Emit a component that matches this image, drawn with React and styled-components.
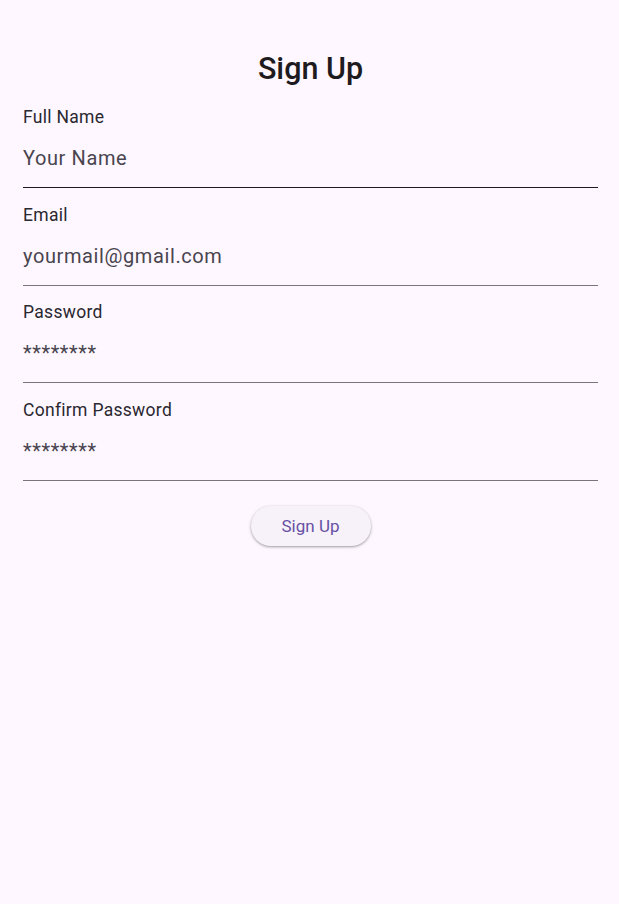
import React from 'react';
import styled, { createGlobalStyle } from 'styled-components';

const GlobalStyle = createGlobalStyle`
  html, body {
    margin: 0;
    padding: 0;
    background: #fef7ff;
  }
  body {
    font-family: Roboto, "Liberation Sans", sans-serif;
    color: #1d1b20;
  }
`;

const Page = styled.div`
  min-height: 904px;
  background: #fef7ff;
  padding: 50px 21px 0 23px;
  box-sizing: border-box;
  display: flex;
  flex-direction: column;
`;

const Title = styled.h1`
  margin: 0 0 17px;
  font-size: 30.5px;
  line-height: 38px;
  font-weight: 500;
  text-align: center;
  color: #1d1b20;
`;

const Field = styled.label`
  display: flex;
  flex-direction: column;
  margin-bottom: 14.7px;
`;

const Label = styled.span`
  font-size: 17.5px;
  line-height: 24px;
  letter-spacing: 0.3px;
  color: #2a2830;
`;

const Input = styled.input`
  height: 59px;
  padding: 0;
  border: none;
  border-bottom: 1px solid ${p => (p.$hover ? '#1d1b20' : '#79747e')};
  background: transparent;
  outline: none;
  font-family: inherit;
  font-size: 20px;
  letter-spacing: 0.6px;
  color: #1d1b20;
  box-sizing: border-box;
  &::placeholder {
    color: #49454f;
  }
`;

const Actions = styled.div`
  display: flex;
  justify-content: center;
  margin-top: 10px;
`;

const Button = styled.button`
  width: 120px;
  height: 40px;
  border: none;
  border-radius: 20px;
  background: #f7f2fa;
  color: #6750a4;
  font-family: inherit;
  font-size: 17px;
  font-weight: 400;
  box-shadow: 0 1px 2px rgba(0, 0, 0, 0.25), 0 1px 3px 1px rgba(0, 0, 0, 0.1);
  cursor: pointer;
`;

const fields = [
  { label: 'Full Name', placeholder: 'Your Name', type: 'text', hover: true },
  { label: 'Email', placeholder: 'yourmail@gmail.com', type: 'email' },
  { label: 'Password', placeholder: '********', type: 'password' },
  { label: 'Confirm Password', placeholder: '********', type: 'password' },
];

export default function App() {
  return (
    <>
      <GlobalStyle />
      <Page>
        <Title>Sign Up</Title>
        {fields.map(f => (
          <Field key={f.label}>
            <Label>{f.label}</Label>
            <Input type={f.type} placeholder={f.placeholder} $hover={f.hover} />
          </Field>
        ))}
        <Actions>
          <Button>Sign Up</Button>
        </Actions>
      </Page>
    </>
  );
}
